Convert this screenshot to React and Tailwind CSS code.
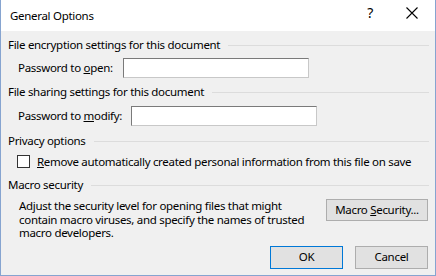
import React from "react";

const font = { fontFamily: '"Segoe UI", "Noto Sans", "Open Sans", sans-serif' };

function Header({ children }) {
  return (
    <div className="flex items-center h-[14px]">
      <span className="whitespace-nowrap">{children}</span>
      <div className="flex-1 ml-2 h-px bg-[#dcdcdc] mr-[6px]" />
    </div>
  );
}

function Btn({ children, def, className = "" }) {
  return (
    <div
      className={
        "flex items-center justify-center bg-[#e1e1e1] border " +
        (def ? "border-[#0078d7] " : "border-[#adadad] ") +
        className
      }
    >
      {children}
    </div>
  );
}

export default function App() {
  return (
    <div
      className="w-[436px] h-[276px] overflow-hidden bg-[#f0f0f0] border-x border-b border-[#86a4d0] flex flex-col text-[11.5px] leading-[14px] text-black tracking-[-0.3px]"
      style={font}
    >
      <div className="h-[31px] bg-white flex items-center pl-[9px] shrink-0">
        <span className="text-[11.5px] tracking-[-0.3px] mt-[1px]">General Options</span>
        <span className="ml-auto mr-[33px] text-[14px] mt-[-6px]">?</span>
        <svg width="12" height="12" viewBox="0 0 12 12" className="mr-[17px] mt-[-6px]">
          <path d="M0.5 0.5 L11.5 11.5 M11.5 0.5 L0.5 11.5" stroke="#000" strokeWidth="1.1" />
        </svg>
      </div>
      <div className="flex flex-col pl-[7px] pt-[7px]">
        <Header>File encryption settings for this document</Header>
        <div className="flex items-center mt-[6px] pl-[10px] h-[20px]">
          <span className="w-[105px]">
            Password to <u>o</u>pen:
          </span>
          <div className="w-[186px] h-[20px] bg-white border border-[#7a7a7a] border-r-[#c8c8c8] border-b-[#c8c8c8]" />
        </div>
        <div className="mt-[7px]">
          <Header>File sharing settings for this document</Header>
        </div>
        <div className="flex items-center mt-[7px] pl-[10px] h-[20px]">
          <span className="w-[113px]">
            Password to <u>m</u>odify:
          </span>
          <div className="w-[186px] h-[20px] bg-white border border-[#7a7a7a] border-r-[#c8c8c8] border-b-[#c8c8c8]" />
        </div>
        <div className="mt-[8px]">
          <Header>Privacy options</Header>
        </div>
        <div className="flex items-center mt-[7px] pl-[9px] h-[13px]">
          <div className="w-[13px] h-[13px] bg-white border border-[#333] shrink-0" />
          <span className="ml-[7px] whitespace-nowrap">
            <u>R</u>emove automatically created personal information from this file on save
          </span>
        </div>
        <div className="mt-[10px]">
          <Header>Macro security</Header>
        </div>
        <div className="flex mt-[6px] pl-[11px]">
          <div className="w-[296px] leading-[13.5px] pt-[1px]">
            Adjust the security level for opening files that might contain macro viruses, and specify the names of trusted macro developers.
          </div>
          <Btn className="ml-auto mr-[7px] w-[102px] h-[22px] mt-[1px] whitespace-pre">
            {"Macro "}<u>S</u>ecurity...
          </Btn>
        </div>
        <div className="flex justify-end mt-[6px] mr-[7px] gap-[12px]">
          <Btn def className="w-[73px] h-[23px]">OK</Btn>
          <Btn className="w-[73px] h-[23px]">Cancel</Btn>
        </div>
      </div>
    </div>
  );
}
